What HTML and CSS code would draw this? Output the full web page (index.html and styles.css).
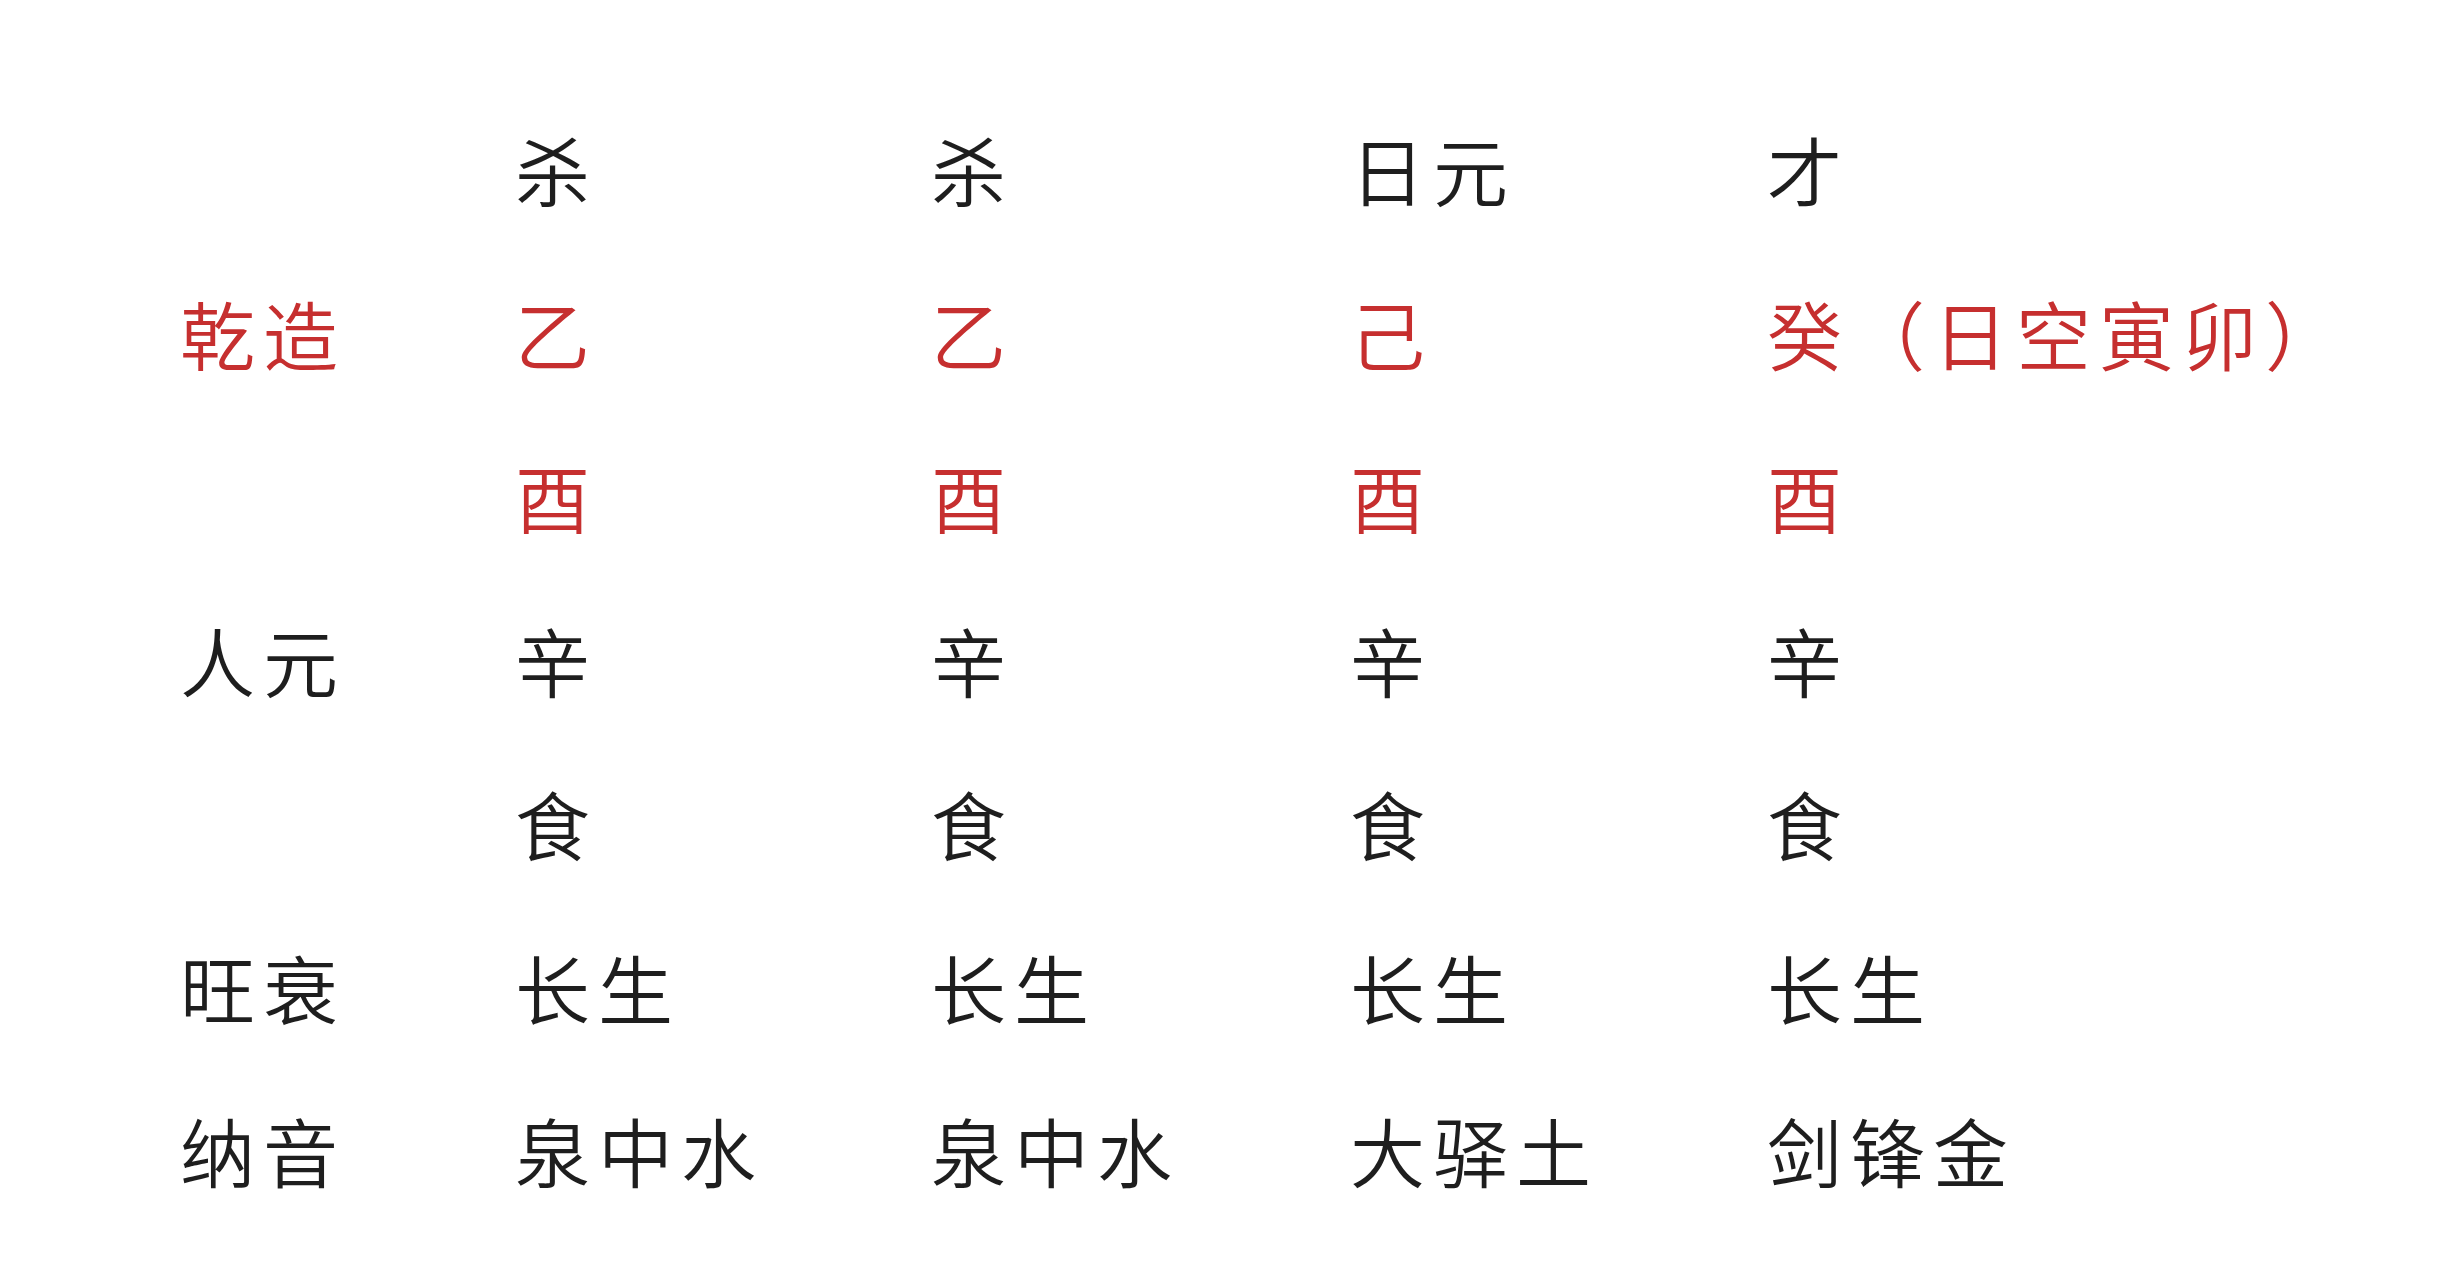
FILE: index.html
```html
<!DOCTYPE html>
<html lang="zh-CN">
<head>
<meta charset="utf-8">
<title>乾造</title>
<link rel="stylesheet" href="styles.css">
</head>
<body>
<div class="chart">
  <div class="cell label"></div>
  <div class="cell">杀</div>
  <div class="cell">杀</div>
  <div class="cell">日元</div>
  <div class="cell">才</div>

  <div class="cell label red">乾造</div>
  <div class="cell red">乙</div>
  <div class="cell red">乙</div>
  <div class="cell red">己</div>
  <div class="cell red">癸（日空寅卯）</div>

  <div class="cell label"></div>
  <div class="cell red">酉</div>
  <div class="cell red">酉</div>
  <div class="cell red">酉</div>
  <div class="cell red">酉</div>

  <div class="cell label">人元</div>
  <div class="cell">辛</div>
  <div class="cell">辛</div>
  <div class="cell">辛</div>
  <div class="cell">辛</div>

  <div class="cell label"></div>
  <div class="cell">食</div>
  <div class="cell">食</div>
  <div class="cell">食</div>
  <div class="cell">食</div>

  <div class="cell label">旺衰</div>
  <div class="cell">长生</div>
  <div class="cell">长生</div>
  <div class="cell">长生</div>
  <div class="cell">长生</div>

  <div class="cell label">纳音</div>
  <div class="cell">泉中水</div>
  <div class="cell">泉中水</div>
  <div class="cell">大驿土</div>
  <div class="cell">剑锋金</div>
</div>
</body>
</html>
```

FILE: styles.css
```css
html, body {
  margin: 0;
  padding: 0;
  background: #ffffff;
}

body {
  width: 2462px;
  height: 1280px;
  overflow: hidden;
  font-family: "Noto Sans CJK SC", "Noto Sans CJK TC", sans-serif;
  font-weight: 350;
  color: #1e1e1e;
}

.chart {
  display: grid;
  grid-template-columns: 335px 416px 419px 417px auto;
  grid-auto-rows: 163.5px;
  padding-left: 180px;
  padding-top: 87px;
}

.cell {
  font-size: 75px;
  line-height: 163.5px;
  letter-spacing: 8px;
  white-space: nowrap;
}

.red {
  color: #c62f2f;
}
```
